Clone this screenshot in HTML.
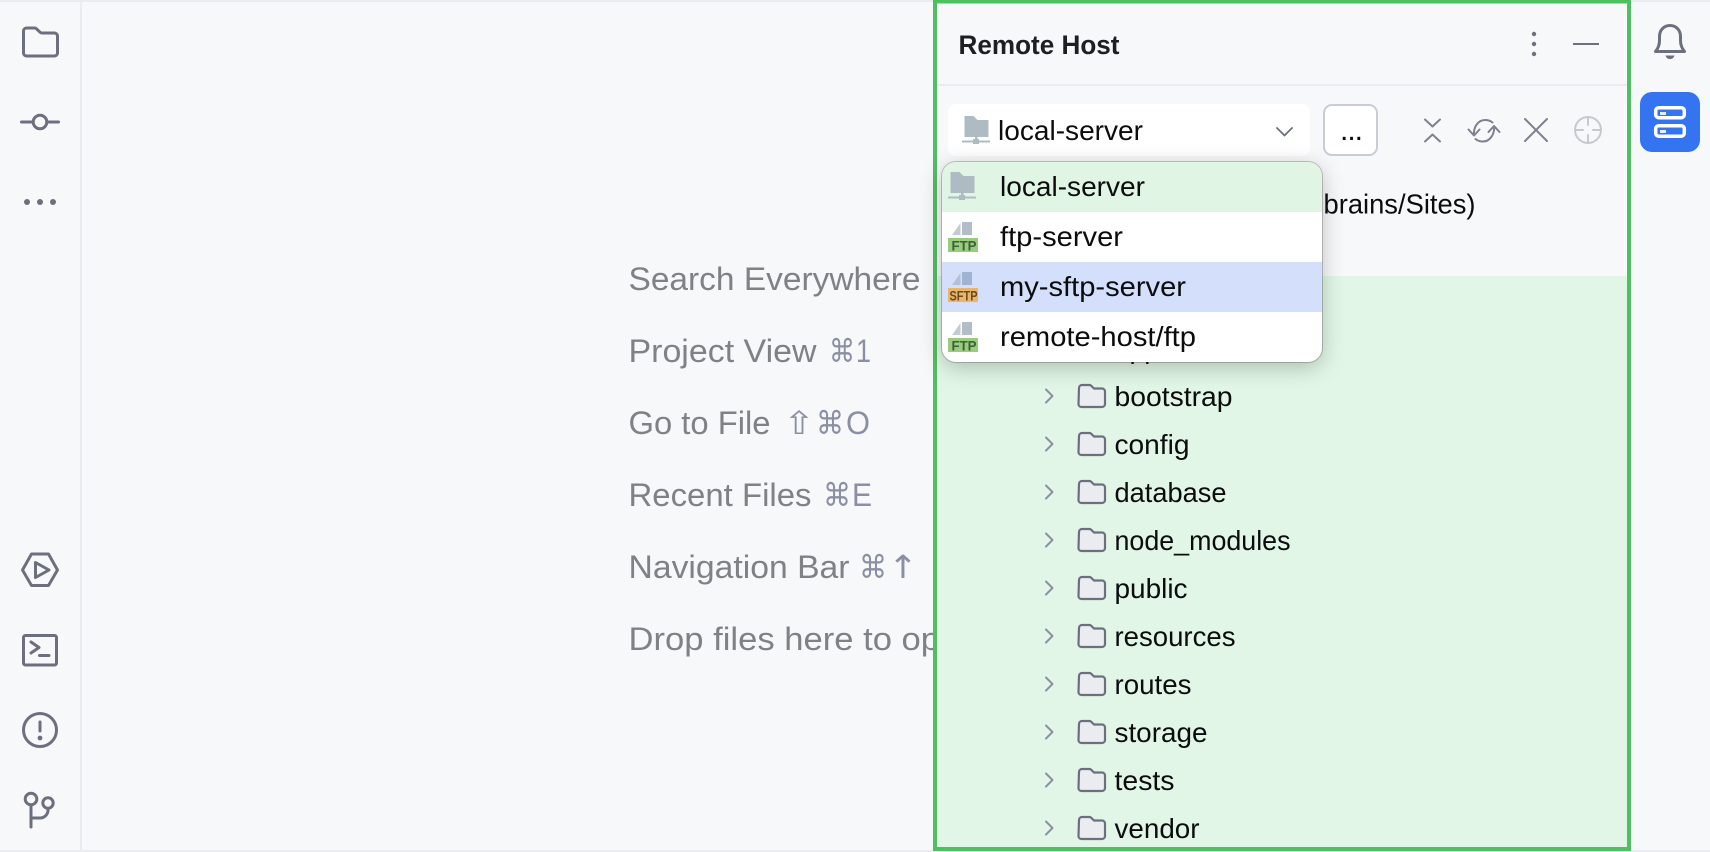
<!DOCTYPE html>
<html><head><meta charset="utf-8"><title>Remote Host</title>
<style>
html,body{margin:0;padding:0;background:#f7f8fa;width:1710px;height:852px;overflow:hidden}
svg{display:block}
text{font-family:"Liberation Sans","DejaVu Sans",sans-serif}
.hint{font-size:32px;fill:#808184}
.key{font-size:32px;fill:#8a8fa3}
.t{font-size:27.5px;fill:#0b0c0e}
.i{fill:none;stroke:#6c707e;stroke-width:3;stroke-linecap:round;stroke-linejoin:round}
.j{fill:none;stroke:#7d8190;stroke-width:2;stroke-linecap:round;stroke-linejoin:round}
.ch{fill:none;stroke:#8c90a0;stroke-width:2;stroke-linecap:round;stroke-linejoin:round}
.fo{fill:#ebecf0;stroke:#6c707e;stroke-width:2.2;stroke-linejoin:round}
.lb{font-size:14px;font-weight:bold}
</style></head><body>
<svg width="1710" height="852" viewBox="0 0 1710 852" xmlns="http://www.w3.org/2000/svg">
<defs>
<filter id="sh" x="-20%" y="-30%" width="140%" height="170%"><feDropShadow dx="0" dy="5" stdDeviation="11" flood-color="#000" flood-opacity=".24"/></filter>
<g id="f"><path class="fo" d="M1079 388a3 3 0 0 1 3-3h7.500a2 2 0 0 1 1.500 .6l3 2.900h8a3 3 0 0 1 3 3v12.500a3 3 0 0 1-3 3h-20.500a3 3 0 0 1-3-3z"/><path class="ch" d="M1046 389.500l6.500 6.500-6.500 6.500"/></g>
<g id="net"><path fill="#afbbc2" d="M2.500 0h9l4 4h11v17h-24z"/><rect x="13" y="20" width="2.500" height="6" fill="#afbbc2"/><rect x="0" y="24.500" width="28" height="2" fill="#afbbc2"/><rect x="11" y="23" width="6" height="5" fill="#afbbc2"/></g>
</defs>
<rect width="1710" height="852" fill="#f7f8fa"/>
<rect width="1710" height="2" fill="#ebecf0"/>
<rect y="850" width="1710" height="2" fill="#ebecf0"/>
<rect x="80" y="2" width="2" height="848" fill="#ebecf0"/>

<!-- left icons -->
<path class="i" d="M23.500 31a3 3 0 0 1 3-3h8a3 3 0 0 1 2 .8l3.500 3.400a3 3 0 0 0 2 .8h12.500a3 3 0 0 1 3 3v17a3 3 0 0 1-3 3h-28a3 3 0 0 1-3-3z"/>
<circle class="i" cx="40" cy="122" r="6.800"/><path class="i" d="M21.500 122h11.500M47 122h11.500"/>
<g fill="#6c707e"><circle cx="27" cy="202" r="3"/><circle cx="40" cy="202" r="3"/><circle cx="53" cy="202" r="3"/></g>
<path class="i" d="M22.500 570l9-16h17l9 16-9 15.500h-17z"/><path class="i" d="M35.500 562.500L49 570l-13.500 7.500z"/>
<rect class="i" x="23.500" y="635.500" width="33" height="29.500" rx="2"/><path class="i" d="M31 642l8 5.500-8 5.500M39.500 655.500h9.500"/>
<circle class="i" cx="40" cy="730" r="16.500"/><path class="i" d="M40 722v9"/><circle cx="40" cy="738" r="2.400" fill="#6c707e"/>
<circle class="i" cx="31" cy="799" r="5.800"/><circle class="i" cx="48" cy="803" r="5.200"/><path class="i" d="M31 805v22M31 818h9a8 8 0 0 0 8-8v-1.500"/>

<!-- hints -->
<text class="hint" x="628.500" y="290" textLength="292" lengthAdjust="spacingAndGlyphs">Search Everywhere</text>
<text class="hint" x="628.500" y="362" textLength="188" lengthAdjust="spacingAndGlyphs">Project View</text>
<text class="key" x="829" y="362" textLength="26" lengthAdjust="spacingAndGlyphs" style="font-family:'DejaVu Sans',sans-serif">⌘</text>
<text class="key" x="856" y="362" textLength="15" lengthAdjust="spacingAndGlyphs">1</text>
<text class="hint" x="628.500" y="434" textLength="142" lengthAdjust="spacingAndGlyphs">Go to File</text>
<text class="key" x="783" y="434" textLength="32" lengthAdjust="spacingAndGlyphs" style="font-family:'DejaVu Sans',sans-serif">⇧</text>
<text class="key" x="816" y="434" textLength="28" lengthAdjust="spacingAndGlyphs" style="font-family:'DejaVu Sans',sans-serif">⌘</text>
<text class="key" x="846" y="434" textLength="24" lengthAdjust="spacingAndGlyphs">O</text>
<text class="hint" x="628.500" y="506" textLength="183" lengthAdjust="spacingAndGlyphs">Recent Files</text>
<text class="key" x="823" y="506" textLength="28" lengthAdjust="spacingAndGlyphs" style="font-family:'DejaVu Sans',sans-serif">⌘</text>
<text class="key" x="852" y="506" textLength="20" lengthAdjust="spacingAndGlyphs">E</text>
<text class="hint" x="628.500" y="578" textLength="221" lengthAdjust="spacingAndGlyphs">Navigation Bar</text>
<text class="key" x="859" y="578" textLength="28" lengthAdjust="spacingAndGlyphs" style="font-family:'DejaVu Sans',sans-serif">⌘</text>
<text class="key" x="888" y="578" textLength="30" lengthAdjust="spacingAndGlyphs" style="font-family:'DejaVu Sans',sans-serif">↑</text>
<text class="hint" x="628.500" y="650" textLength="350" lengthAdjust="spacingAndGlyphs">Drop files here to open</text>

<!-- panel -->
<rect x="933" y="0" width="698" height="851" fill="#f7f8fa"/>
<rect x="937" y="276" width="690" height="571" fill="#e1f6e6"/>
<rect x="937" y="84" width="690" height="2" fill="#ebecf0"/>
<text x="958.500" y="54" font-size="26.500" font-weight="bold" fill="#1e1f22" textLength="161" lengthAdjust="spacingAndGlyphs">Remote Host</text>
<g fill="#6c707e"><circle cx="1534" cy="34" r="2.200"/><circle cx="1534" cy="44" r="2.200"/><circle cx="1534" cy="54" r="2.200"/></g>
<rect x="1573" y="43" width="26" height="2" fill="#6c707e"/>

<rect x="948" y="104" width="362" height="52" rx="8" fill="#fff"/>
<use href="#net" x="962" y="116"/>
<text class="t" x="998" y="140" textLength="145" lengthAdjust="spacingAndGlyphs">local-server</text>
<path fill="none" stroke="#6c707e" stroke-width="1.800" stroke-linecap="round" stroke-linejoin="round" d="M1277 128l7.500 7.500 7.500-7.500"/>
<rect x="1324" y="105" width="53" height="50" rx="8" fill="#fff" stroke="#c9ccd6" stroke-width="2"/>
<text x="1340" y="140" font-size="30" fill="#0b0c0e" textLength="23" lengthAdjust="spacing">...</text>

<path class="j" d="M1425 119.500l7.500 7 7.500-7M1425 141.500l7.500-7 7.500 7"/>
<path class="j" d="M1474 135.500c-1-8 4-15.500 11-15.500 3 0 5.500 .8 7.500 2.500M1468.500 129.500l5.500 6 5.500-6M1494 126c1 8-4 15.500-11 15.500-3 0-5.500-.8-7.500-2.500M1488.500 132l5.500-6 5.500 6"/>
<path class="j" d="M1525 119l22 22M1547 119l-22 22"/>
<g fill="none" stroke="#c8c9cc" stroke-width="2" stroke-linecap="round"><circle cx="1588" cy="130" r="13"/><path d="M1588 118v7M1588 135v7M1576 130h7M1593 130h7"/></g>

<!-- right -->
<path class="i" d="M1655.500 51.500c2.500-3 4-6 4-11v-4c0-6.500 4.500-11 10.500-11s10.500 4.500 10.500 11v4c0 5 1.500 8 4 11z"/>
<path fill="#6c707e" d="M1665.500 55.500h9c-.8 2.400-2.500 3.600-4.500 3.600s-3.700-1.200-4.500-3.600z"/>
<rect x="1640" y="92" width="60" height="60" rx="12" fill="#3574f0"/>
<g fill="none" stroke="#fff" stroke-width="3.500"><rect x="1655.700" y="107.700" width="28.600" height="10" rx="3"/><rect x="1655.700" y="125.700" width="28.600" height="10.500" rx="3"/></g>
<g fill="#e4ecfd"><rect x="1660" y="112" width="6" height="3"/><rect x="1660" y="130" width="6" height="3"/></g>

<!-- tree -->
<text class="t" x="1323.500" y="213.500" textLength="152" lengthAdjust="spacingAndGlyphs">brains/Sites)</text>
<text class="t" x="1115" y="358" textLength="44" lengthAdjust="spacingAndGlyphs">app</text>
<use href="#f"/><text class="t" x="1114.500" y="406" textLength="118" lengthAdjust="spacingAndGlyphs">bootstrap</text>
<use href="#f" y="48"/><text class="t" x="1114.500" y="454" textLength="75" lengthAdjust="spacingAndGlyphs">config</text>
<use href="#f" y="96"/><text class="t" x="1114.500" y="502" textLength="112" lengthAdjust="spacingAndGlyphs">database</text>
<use href="#f" y="144"/><text class="t" x="1114.500" y="550" textLength="176" lengthAdjust="spacingAndGlyphs">node_modules</text>
<use href="#f" y="192"/><text class="t" x="1114.500" y="598" textLength="73" lengthAdjust="spacingAndGlyphs">public</text>
<use href="#f" y="240"/><text class="t" x="1114.500" y="646" textLength="121" lengthAdjust="spacingAndGlyphs">resources</text>
<use href="#f" y="288"/><text class="t" x="1114.500" y="694" textLength="77" lengthAdjust="spacingAndGlyphs">routes</text>
<use href="#f" y="336"/><text class="t" x="1114.500" y="742" textLength="93" lengthAdjust="spacingAndGlyphs">storage</text>
<use href="#f" y="384"/><text class="t" x="1114.500" y="790" textLength="60" lengthAdjust="spacingAndGlyphs">tests</text>
<use href="#f" y="432"/><text class="t" x="1114.500" y="838" textLength="85" lengthAdjust="spacingAndGlyphs">vendor</text>

<!-- green border -->
<rect x="935" y="1.500" width="694" height="847.500" fill="none" stroke="#50bf61" stroke-width="4"/>

<!-- popup -->
<rect x="942" y="162" width="380" height="200" rx="14" fill="#fff" filter="url(#sh)"/>
<path d="M942 212v-36a14 14 0 0 1 14-14h352a14 14 0 0 1 14 14v36z" fill="#e1f5e5"/>
<rect x="942" y="262" width="380" height="50" fill="#d4dffb"/>
<rect x="941.500" y="161.500" width="381" height="201" rx="14.500" fill="none" stroke="#000" stroke-opacity=".2"/>
<use href="#net" x="948" y="172"/>
<text class="t" x="1000" y="196" textLength="145" lengthAdjust="spacingAndGlyphs">local-server</text>
<text class="t" x="1000" y="246" textLength="123" lengthAdjust="spacingAndGlyphs">ftp-server</text>
<text class="t" x="1000" y="296" textLength="186" lengthAdjust="spacingAndGlyphs">my-sftp-server</text>
<text class="t" x="1000" y="346" textLength="196" lengthAdjust="spacingAndGlyphs">remote-host/ftp</text>

<polygon points="952,235 960.500,223 960.500,235" fill="#c3cbd3"/><rect x="962" y="222" width="10" height="13" fill="#b3bdc7"/>
<rect x="948" y="238" width="30" height="14" fill="#98cd7e"/>
<text class="lb" x="951.500" y="250.500" fill="#3e5f37" textLength="25" lengthAdjust="spacingAndGlyphs">FTP</text>

<polygon points="952,285 960.500,273 960.500,285" fill="#b3c1d8"/><rect x="962" y="272" width="10" height="13" fill="#a0b3d0"/>
<rect x="948" y="288" width="30" height="14" fill="#e8b56d"/>
<text class="lb" x="949.500" y="300.500" fill="#6b4a1c" textLength="28" lengthAdjust="spacingAndGlyphs">SFTP</text>

<polygon points="952,335 960.500,323 960.500,335" fill="#c3cbd3"/><rect x="962" y="322" width="10" height="13" fill="#b3bdc7"/>
<rect x="948" y="338" width="30" height="14" fill="#98cd7e"/>
<text class="lb" x="951.500" y="350.500" fill="#3e5f37" textLength="25" lengthAdjust="spacingAndGlyphs">FTP</text>
</svg>
</body></html>
